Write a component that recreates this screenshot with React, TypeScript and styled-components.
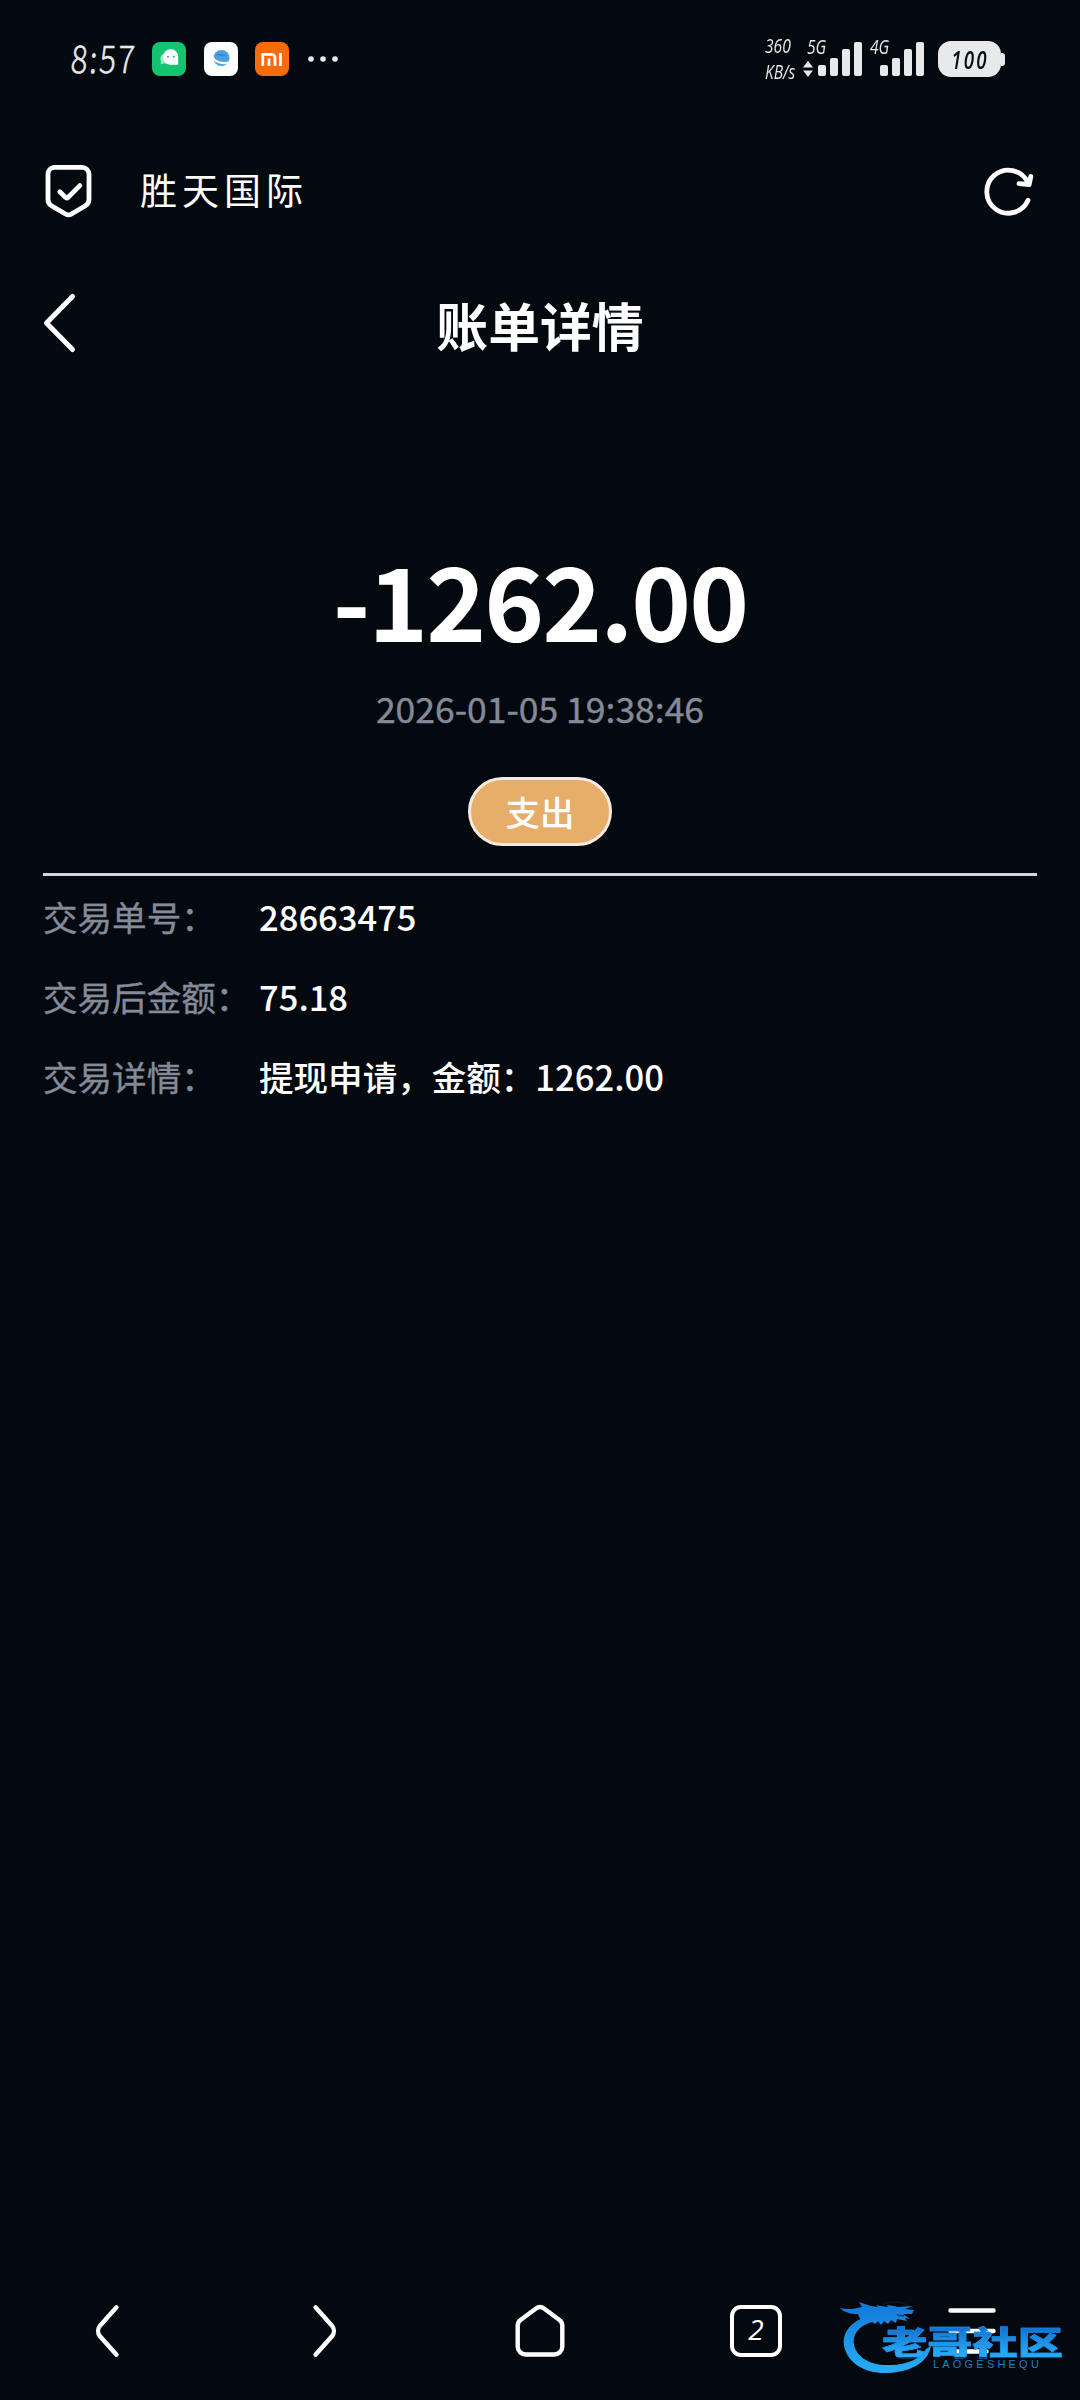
import React from 'react';
import styled, { createGlobalStyle } from 'styled-components';

const Global = createGlobalStyle`
  * { box-sizing: border-box; }
  html, body { margin: 0; padding: 0; background: #04080f; }
  body { font-family: "Noto Sans CJK SC", sans-serif; color: #fff; }
  svg { display: block; flex: none; overflow: visible; }
`;

const Screen = styled.div`
  position: relative;
  display: flex;
  flex-direction: column;
  width: 1080px;
  height: 2400px;
  overflow: hidden;
  background: #04080f;
`;

const StatusBar = styled.header`
  display: flex;
  justify-content: space-between;
  align-items: center;
  height: 118px;
  padding: 0 75px 0 71px;
  color: #e8e9eb;
`;

const StatusGroup = styled.div<{ $gap: number }>`
  display: flex;
  align-items: center;
  gap: ${(p) => p.$gap}px;
`;

const Clock = styled.span`
  width: 63px;
  margin-right: 1px;
  padding-bottom: 5px;
  font-size: 38px;
  font-weight: 300;
  line-height: 36px;
  letter-spacing: 2.4px;
  white-space: nowrap;
  transform: scaleX(0.82) skewX(-5deg);
  transform-origin: 0 50%;
  -webkit-text-stroke: 0.5px #e8e9eb;
`;

const Speed = styled.div`
  display: flex;
  flex-direction: column;
  width: 34px;
  height: 48px;
  justify-content: space-between;
  font-family: "Open Sans", sans-serif;
  font-size: 20px;
  line-height: 22px;
  font-style: italic;
  white-space: nowrap;
  letter-spacing: 0;
  transform: scaleX(0.78);
  transform-origin: 0 50%;
`;

const Signal = styled.div<{ $width: number }>`
  position: relative;
  width: ${(p) => p.$width}px;
  height: 48px;
`;

const Network = styled.span<{ $left: number }>`
  position: absolute;
  left: ${(p) => p.$left}px;
  top: 1px;
  font-family: "Open Sans", sans-serif;
  font-size: 20px;
  line-height: 22px;
  font-style: italic;
  transform: scaleX(0.78);
  transform-origin: 0 50%;
`;

const Bars = styled.div`
  display: flex;
  align-items: flex-end;
  justify-content: flex-end;
  gap: 4px;
  height: 41px;
`;

const Bar = styled.i<{ $h: number }>`
  width: 8px;
  height: ${(p) => p.$h}px;
  border-radius: 2px;
  background: #e8e9eb;
`;

const BatteryWrap = styled.div`
  display: flex;
  align-items: center;
  margin-left: 14px;
`;

const Battery = styled.div`
  display: flex;
  align-items: center;
  justify-content: center;
  width: 63px;
  height: 36px;
  border-radius: 13px;
  background: #e8e9eb;
  color: #080b12;
`;

const BatteryLevel = styled.span`
  font-family: "Open Sans", sans-serif;
  font-size: 26px;
  font-style: italic;
  font-weight: 600;
  letter-spacing: 3px;
  line-height: 36px;
  transform: scaleX(0.72);
`;

const BatteryNub = styled.i`
  width: 4px;
  height: 13px;
  border-radius: 0 3px 3px 0;
  background: #e8e9eb;
`;

const AddressBar = styled.div`
  display: flex;
  align-items: center;
  height: 146px;
  padding: 0 47px 0 44px;
`;

const SiteName = styled.span`
  flex: 1;
  margin-left: 46px;
  padding-bottom: 5px;
  font-size: 37px;
  font-weight: 400;
  line-height: 48px;
  letter-spacing: 5px;
`;

const TitleBar = styled.div`
  display: grid;
  grid-template-columns: 100px 1fr 100px;
  align-items: center;
  height: 118px;
`;

const BackButton = styled.button`
  display: flex;
  padding: 0 0 0 42px;
  border: 0;
  background: none;
`;

const Title = styled.h1`
  margin: 0;
  padding-top: 3px;
  text-align: center;
  font-size: 51.84px;
  line-height: 76px;
  font-weight: 700;
`;

const Summary = styled.section`
  display: flex;
  flex-direction: column;
  align-items: center;
  height: 494px;
  margin: 0 43px;
  padding-top: 141px;
  border-bottom: 3px solid #d4d7df;
`;

const Amount = styled.div`
  font-size: 101.5px;
  line-height: 150px;
  font-weight: 700;
  letter-spacing: -1.9px;
`;

const Time = styled.div`
  margin-top: 9px;
  font-size: 35.5px;
  line-height: 52px;
  color: #858a99;
  -webkit-text-stroke: 0.4px #858a99;
`;

const Tag = styled.span`
  display: flex;
  align-items: center;
  justify-content: center;
  width: 144px;
  height: 69px;
  margin-top: 43px;
  padding-bottom: 2px;
  border: 3px solid #f6e9df;
  border-radius: 35px;
  background: #e6ae69;
  font-size: 34.5px;
  line-height: 50px;
  font-weight: 500;
`;

const Details = styled.dl`
  display: flex;
  flex-direction: column;
  flex: 1;
  margin: 0;
  padding: 0 43px 0;
`;

const Row = styled.div`
  display: flex;
  align-items: center;
  height: 80px;
  font-size: 34.56px;
  line-height: 52px;
`;

const Label = styled.dt`
  width: 216px;
  color: #858a99;
  -webkit-text-stroke: 0.4px #858a99;
`;

const Value = styled.dd`
  margin: 0;
  font-weight: 500;
`;

const BottomNav = styled.nav`
  display: grid;
  grid-template-columns: repeat(5, 1fr);
  align-items: center;
  justify-items: center;
  height: 138px;
`;

const TabCount = styled.div`
  display: flex;
  align-items: center;
  justify-content: center;
  width: 52px;
  height: 52px;
  border: 4.5px solid #fff;
  border-radius: 11px;
  padding-bottom: 5px;
  font-family: "Open Sans", sans-serif;
  font-size: 28px;
  font-style: italic;
  line-height: 30px;
`;

const Watermark = styled.div`
  position: absolute;
  left: 840px;
  top: 2300px;
  width: 230px;
  height: 80px;
`;

const WatermarkName = styled.span`
  position: absolute;
  left: 42px;
  top: 26px;
  font-size: 33px;
  line-height: 31px;
  font-weight: 900;
  white-space: nowrap;
  transform: scaleX(1.37);
  transform-origin: 0 50%;
  color: transparent;
  background: linear-gradient(#1473d2 10%, #27a8f4 85%);
  background-clip: text;
  -webkit-background-clip: text;
  -webkit-text-stroke: 0.5px #1d8fe6;
`;

const WatermarkLatin = styled.span`
  position: absolute;
  left: 93px;
  top: 59px;
  font-family: "Liberation Sans", sans-serif;
  font-size: 11px;
  line-height: 10px;
  letter-spacing: 3.2px;
  color: #1f80c9;
`;

const line = {
  fill: 'none',
  stroke: '#fff',
  strokeLinecap: 'round' as const,
  strokeLinejoin: 'round' as const,
};

const WeChatIcon = () => (
  <svg width="34" height="34" viewBox="0 0 34 34">
    <rect width="34" height="34" rx="8" fill="#14c36f" />
    <path d="M8.500 22.200l.6-2.600a5.500 5.500 0 0 1 4.500-8.400l1.400 10.400h-3z" fill="#a5e8c8" />
    <path d="M26.200 22.800H19a7.600 7.900 0 1 1 7.200-7.800z" fill="#fff" />
    <circle cx="16" cy="14.700" r="0.900" fill="#14a860" />
    <circle cx="21.800" cy="14.700" r="0.900" fill="#14a860" />
  </svg>
);

const BrowserIcon = () => (
  <svg width="34" height="34" viewBox="0 0 34 34">
    <rect width="34" height="34" rx="8" fill="#fdfeff" />
    <circle cx="17.500" cy="16" r="8" fill="#4b9fdf" />
    <path d="M8.500 14.500c1.500 5 9.500 8.500 17.500 5.500" fill="none" stroke="#fdfeff" strokeWidth="2.200" />
    <path d="M12.500 12.500c3-1 4 2 9 .2" fill="none" stroke="#2a7fcb" strokeWidth="1.200" />
  </svg>
);

const MiIcon = () => (
  <svg width="34" height="34" viewBox="0 0 34 34">
    <rect width="34" height="34" rx="8" fill="#f96a08" />
    <path d="M7.800 24V12.300h8.700a3.500 3.500 0 0 1 3.500 3.500V24M14 16.500V24M25.400 11V24" fill="none" stroke="#fff" strokeWidth="2.800" />
  </svg>
);

const MoreDots = () => (
  <svg width="34" height="6" viewBox="-2 0 34 6" fill="#e8e9eb">
    <circle cx="3" cy="3" r="2.800" />
    <circle cx="15" cy="3" r="2.800" />
    <circle cx="27" cy="3" r="2.800" />
  </svg>
);

const DataArrows = styled.svg`
  position: absolute;
  left: 4px;
  top: 26px;
`;

const ShieldIcon = () => (
  <svg width="50" height="54" viewBox="0 0 50 54" {...line} strokeWidth="4.800">
    <path d="M10 3.300H38a7 7 0 0 1 7 7V35.500a7 7 0 0 1-3.600 6.200L27.500 50a6 6 0 0 1-6 0L7.500 41.700A7 7 0 0 1 4 35.500V10a6.700 6.700 0 0 1 6-6.700z" />
    <path d="M15.800 27.800l5.700 5.600a1.800 1.800 0 0 0 2.500 0L35.800 21.600" />
  </svg>
);

const RefreshIcon = () => (
  <svg width="50" height="50" viewBox="0 0 50 50" {...line} strokeWidth="4.800">
    <path d="M45 34.200A21.500 21.500 0 1 1 44.500 16" />
    <path d="M47.800 10.500l-1.600 8-10.200-.8" />
  </svg>
);

const Dragon = () => (
  <svg width="100" height="80" viewBox="0 0 100 80">
    <defs>
      <linearGradient id="dragon" x1="0" y1="0" x2="0" y2="1">
        <stop offset="0" stopColor="#1178d8" />
        <stop offset="1" stopColor="#28adf6" />
      </linearGradient>
    </defs>
    <path
      fill="url(#dragon)"
      d="M20 19C9 25 2 34 4 46c4 18 22 28 44 27 22-1 40-10 43-27l-5 3c-5 9-18 16-36 16-20 1-33-8-36-20-2-10 4-19 18-23l3 2 3-3 3 4 3-4 4 3 3-4 5 3 1-4 10 2-2-3 5 1-7-5 9 0 2-4-9-1 8-3-15 1-4-1-7-1 1 2-7-1-5-1 2 2-7-1-12-4 3 5c-8 2-15 3-22 1 4 4 10 6 18 6z"
    />
    <path d="M43 4c8-3 20-3 30 4" fill="none" stroke="#0b2a48" strokeWidth="0.600" />
    <path d="M57 15l7 1" stroke="#04356a" strokeWidth="1.500" />
  </svg>
);

const details = [
  { label: '交易单号：', value: '28663475' },
  { label: '交易后金额：', value: '75.18' },
  { label: '交易详情：', value: '提现申请，金额：1262.00' },
];

const barHeights = [11, 18, 27, 34];

export default function App() {
  return (
    <Screen>
      <Global />
      <StatusBar>
        <StatusGroup $gap={17.3}>
          <Clock>8:57</Clock>
          <WeChatIcon />
          <BrowserIcon />
          <MiIcon />
          <MoreDots />
        </StatusGroup>
        <StatusGroup $gap={0}>
          <Speed>
            <span>360</span>
            <span>KB/s</span>
          </Speed>
          <Signal $width={63}>
            <Network $left={8}>5G</Network>
            <DataArrows width="10" height="16" viewBox="0 0 10 16" fill="#e8e9eb">
              <path d="M5 0l5 6.500H0zM5 16l5-6.500H0z" />
            </DataArrows>
            <Bars>{barHeights.map((h) => <Bar key={h} $h={h} />)}</Bars>
          </Signal>
          <Signal $width={62}>
            <Network $left={8}>4G</Network>
            <Bars>{barHeights.map((h) => <Bar key={h} $h={h} />)}</Bars>
          </Signal>
          <BatteryWrap>
            <Battery>
              <BatteryLevel>100</BatteryLevel>
            </Battery>
            <BatteryNub />
          </BatteryWrap>
        </StatusGroup>
      </StatusBar>
      <AddressBar>
        <ShieldIcon />
        <SiteName>胜天国际</SiteName>
        <RefreshIcon />
      </AddressBar>
      <TitleBar>
        <BackButton aria-label="返回">
          <svg width="34" height="60" viewBox="0 0 34 60" {...line} strokeWidth="5">
            <path d="M30.500 3.500L4.500 30l26 26.500" />
          </svg>
        </BackButton>
        <Title>账单详情</Title>
      </TitleBar>
      <Summary>
        <Amount>-1262.00</Amount>
        <Time>2026-01-05 19:38:46</Time>
        <Tag>支出</Tag>
      </Summary>
      <Details>
        {details.map((d) => (
          <Row key={d.label}>
            <Label>{d.label}</Label>
            <Value>{d.value}</Value>
          </Row>
        ))}
      </Details>
      <BottomNav>
        <svg width="52" height="52" viewBox="0 0 52 52" {...line} strokeWidth="4.400">
          <path d="M34.500 2.300L18 20.800a8 8 0 0 0 0 10.400L34.500 49.700" />
        </svg>
        <svg width="52" height="52" viewBox="0 0 52 52" {...line} strokeWidth="4.400">
          <path d="M17.500 2.300L34 20.800a8 8 0 0 1 0 10.400L17.500 49.700" />
        </svg>
        <svg width="52" height="52" viewBox="0 0 52 52" {...line} strokeWidth="4.400">
          <path d="M22 3.500a6.500 6.500 0 0 1 8 0L45.500 15a7 7 0 0 1 2.800 5.600V41.500a8 8 0 0 1-8 8H11.700a8 8 0 0 1-8-8V20.600A7 7 0 0 1 6.500 15z" />
        </svg>
        <TabCount>2</TabCount>
        <svg width="52" height="52" viewBox="0 0 52 52" {...line} strokeWidth="4.400">
          <path d="M4.500 5.500h43M4.500 26h43M4.500 46.500h36" />
        </svg>
      </BottomNav>
      <Watermark>
        <Dragon />
        <WatermarkName>老哥社区</WatermarkName>
        <WatermarkLatin>LAOGESHEQU</WatermarkLatin>
      </Watermark>
    </Screen>
  );
}
